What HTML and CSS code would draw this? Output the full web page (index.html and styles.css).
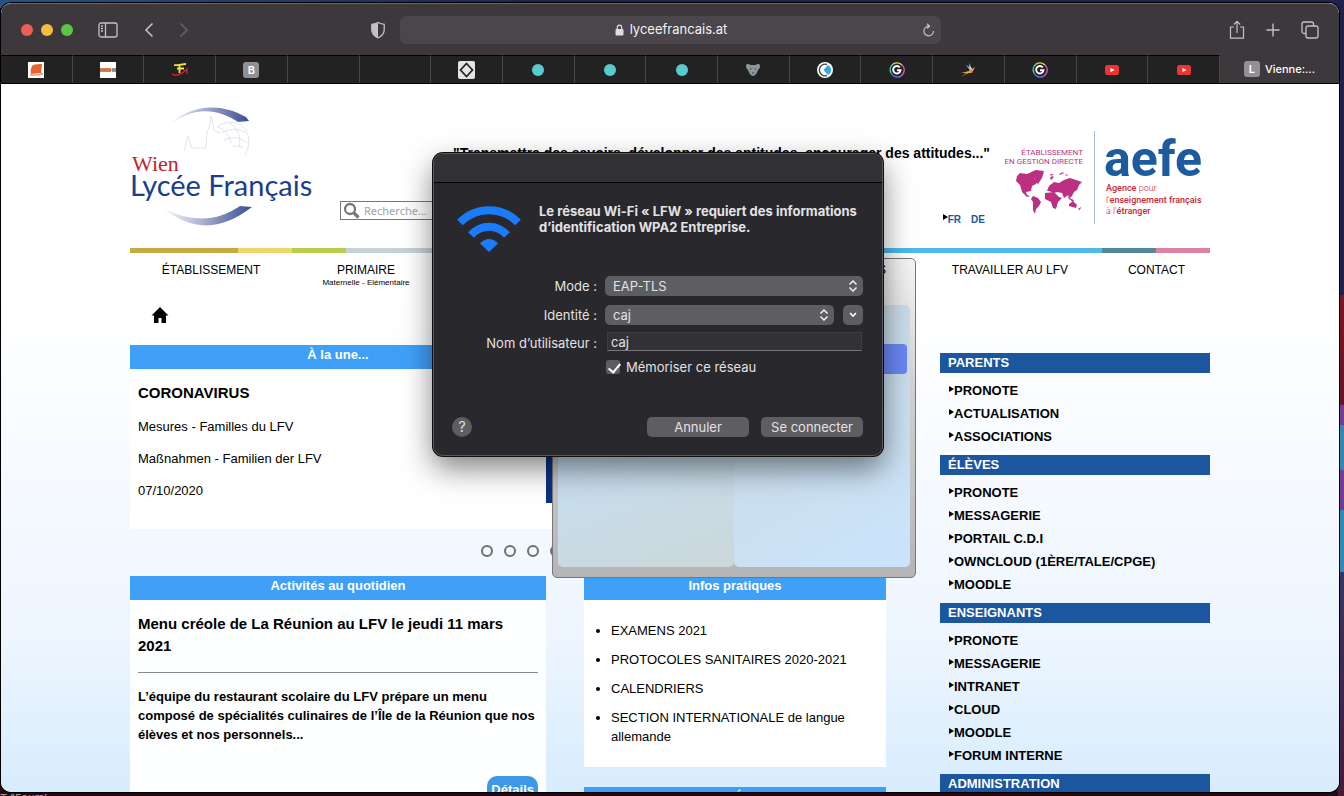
FILE: index.html
```html
<!DOCTYPE html>
<html lang="fr">
<head>
    <meta charset="UTF-8">
    <meta name="viewport" content="width=device-width, initial-scale=1.0">
    <title>Vienne: Lycée Français</title>
    <link rel="stylesheet" href="styles.css">
</head>
<body>
    <div class="desktop-label">T 15oum!</div>
    <div class="browser">
        <div class="toolbar">
            <div class="tool-group">
                <div class="lights"><span class="light red"></span><span class="light yellow"></span><span class="light green"></span></div>
                <button class="tool sidebar-btn" aria-label="Barre latérale">
                    <svg width="20" height="16" viewBox="0 0 20 16" fill="none" stroke="currentColor" stroke-width="1.3"><rect x="1" y="1" width="18" height="14" rx="2"/><path d="M7.5 1v14M3 4h2M3 6.500h2M3 9h2"/></svg>
                </button>
                <button class="tool back-btn" aria-label="Précédent">
                    <svg width="10" height="16" viewBox="0 0 10 16" fill="none" stroke="currentColor" stroke-width="1.6"><path d="M8.500 1.500L2 8l6.500 6.500"/></svg>
                </button>
                <button class="tool dim" aria-label="Suivant">
                    <svg width="10" height="16" viewBox="0 0 10 16" fill="none" stroke="currentColor" stroke-width="1.6"><path d="M1.500 1.500L8 8l-6.500 6.500"/></svg>
                </button>
            </div>
            <div class="address-area">
                <button class="tool" aria-label="Confidentialité">
                    <svg width="16" height="18" viewBox="0 0 16 18"><path d="M8 1.500C6.500 2.500 4 3 1.800 3.300V9c0 3.500 2.500 6 6.200 7.800C11.700 15 14.200 12.500 14.200 9V3.300C12 3 9.500 2.500 8 1.500z" fill="none" stroke="currentColor" stroke-width="1.300"/><path d="M8 1.500C6.500 2.500 4 3 1.800 3.300V9c0 3.500 2.500 6 6.200 7.800z" fill="currentColor"/></svg>
                </button>
                <div class="address">
                    <span class="url">
                        <svg width="9" height="12" viewBox="0 0 9 12"><rect x="0.500" y="5" width="8" height="6.500" rx="1" fill="#ddd"/><path d="M2.300 5.500V3.300a2.200 2.200 0 0 1 4.400 0v2.200" fill="none" stroke="#ddd" stroke-width="1.200"/></svg>
                        lyceefrancais.at
                    </span>
                    <button class="tool reload" aria-label="Recharger">
                        <svg width="13" height="14" viewBox="0 0 13 14" fill="none" stroke="currentColor" stroke-width="1.200"><path d="M7 3.200a4.800 4.800 0 1 0 4.500 4.800M5 .8l2.600 2.400L5 5.500"/></svg>
                    </button>
                </div>
            </div>
            <div class="tool-group end">
                <button class="tool" aria-label="Partager">
                    <svg width="16" height="20" viewBox="0 0 16 20" fill="none" stroke="currentColor" stroke-width="1.200"><path d="M5 7H1.500v11.200h13V7H11M8 13V1.500M4.800 4.500L8 1.300l3.200 3.200"/></svg>
                </button>
                <button class="tool" aria-label="Nouvel onglet">
                    <svg width="14" height="14" viewBox="0 0 14 14" stroke="currentColor" stroke-width="1.400"><path d="M7 .5v13M.5 7h13"/></svg>
                </button>
                <button class="tool" aria-label="Tous les onglets">
                    <svg width="18" height="18" viewBox="0 0 18 18" fill="none" stroke="currentColor" stroke-width="1.300"><rect x="5" y="5" width="12" height="12" rx="2"/><path d="M5 12.500H3a2 2 0 0 1-2-2V3a2 2 0 0 1 2-2h7.500a2 2 0 0 1 2 2v2"/></svg>
                </button>
            </div>
        </div>

        <div class="tabs">
            <div class="tab"><svg width="16" height="16" viewBox="0 0 16 16"><path fill="#fff" d="M0 0h16v16H0z"/><path d="M5 3c3-1 6-1 9-1l-1 9-10 1c-1-3 0-7 2-9z" fill="#e8622f"/><path d="M2 13h9l3-2v2" stroke="#e8622f" fill="none"/></svg></div>
            <div class="tab"><svg width="16" height="16" viewBox="0 0 16 16"><path fill="#fff" d="M0 0h16v16H0z"/><path d="M0 6h11v4H0z" fill="#d9804c"/><path d="M12 6h4v4h-4z" fill="#999"/><path d="M0 8h16" stroke="#a87858"/></svg></div>
            <div class="tab"><svg width="18" height="16" viewBox="0 0 18 16" fill="none"><path d="M3 3c3 1 8-1 12-1M6 6.500h7M8.500 3v8" stroke="#f2e43a" stroke-width="1.800"/><path d="M1 12c5 3 10 0 15-5M16 6v6" stroke="#d3242f" stroke-width="1.300"/></svg></div>
            <div class="tab"><span class="letter">B</span></div>
            <div class="tab"></div>
            <div class="tab"></div>
            <div class="tab"><svg width="17" height="18" viewBox="0 0 17 18"><rect width="17" height="18" rx="2" fill="#e4e4e4"/><path d="M8.500 2.500l6 6.500-6 6.500-6-6.500z" fill="none" stroke="#222" stroke-width="1.700"/></svg></div>
            <div class="tab"><span class="teal-dot"></span></div>
            <div class="tab"><span class="teal-dot"></span></div>
            <div class="tab"><span class="teal-dot"></span></div>
            <div class="tab"><svg width="16" height="14" viewBox="0 0 16 14"><path d="M1 3c0-3 4-2 4-1h6c0-1 4-2 4 1 0 2-1 3-2 4-1 3-3 6-5 6s-4-3-5-6C2 6 1 5 1 3z" fill="#8c979b"/><path d="M5 6h1.500M9.500 6H11M7 10h2" stroke="#444" stroke-width="1.200"/></svg></div>
            <div class="tab"><svg width="16" height="16" viewBox="0 0 16 16"><circle cx="8" cy="8" r="8" fill="#fff"/><path d="M10 2.500a5.800 5.800 0 1 0 0 11" fill="none" stroke="#3d4148" stroke-width="1.400"/><path d="M6.500 8L11 3c4 2 4 8 0 10z" fill="#31a8df"/></svg></div>
            <div class="tab"><svg width="16" height="16" viewBox="0 0 16 16" fill="none" stroke-width="1.500"><path d="M2 11A7 7 0 0 1 4 2.200" stroke="#4fc4ad"/><path d="M4 2.200A7 7 0 0 1 13 3" stroke="#e9c74c"/><path d="M13 3a7 7 0 0 1-1 11" stroke="#c75bbb"/><path d="M12 14A7 7 0 0 1 2 11" stroke="#626de0"/><path d="M10.800 5.500A3.700 3.700 0 1 0 11.500 8.300H8" stroke="#fff" stroke-width="1.900"/></svg></div>
            <div class="tab"><svg width="16" height="16" viewBox="0 0 16 16"><path d="M1 15l8-6 3 1-6 2z" fill="#f2c62f"/><path d="M6 3l4 6 3-1-3-3z" fill="#6f9cc9"/><path d="M1 11l8-2 6-4-3 6z" fill="#e8a04e"/><path d="M9 1l1 7 2-1z" fill="#d8d8d8"/><path d="M10 10l3-1-1 2z" fill="#dc4a31"/></svg></div>
            <div class="tab"><svg width="16" height="16" viewBox="0 0 16 16" fill="none" stroke-width="1.500"><path d="M2 11A7 7 0 0 1 4 2.200" stroke="#4fc4ad"/><path d="M4 2.200A7 7 0 0 1 13 3" stroke="#e9c74c"/><path d="M13 3a7 7 0 0 1-1 11" stroke="#c75bbb"/><path d="M12 14A7 7 0 0 1 2 11" stroke="#626de0"/><path d="M10.800 5.500A3.700 3.700 0 1 0 11.500 8.300H8" stroke="#fff" stroke-width="1.900"/></svg></div>
            <div class="tab"><svg width="14" height="10" viewBox="0 0 14 10"><rect width="14" height="10" rx="2.500" fill="#ec3434"/><path d="M5.500 3v4l4-2z" fill="#fff"/></svg></div>
            <div class="tab"><svg width="14" height="10" viewBox="0 0 14 10"><rect width="14" height="10" rx="2.500" fill="#ec3434"/><path d="M5.500 3v4l4-2z" fill="#fff"/></svg></div>
            <div class="tab active"><span class="letter">L</span>Vienne:...</div>
        </div>

        <div class="page">
            <div class="content">
                <header class="header">
                    <svg class="logo" width="185" height="124" viewBox="0 0 185 124">
                        <defs>
                            <linearGradient id="arc"><stop offset="0" stop-color="#fff"/><stop offset="1" stop-color="#3a4e93"/></linearGradient>
                        </defs>
                        <path d="M36 20C60-3 90-5 116 10l3 4-11 1C84-1 60 1 36 20z" fill="url(#arc)"/>
                        <path d="M32 100c28 24 58 25 90 0l-12-1C88 114 62 117 32 100z" fill="url(#arc)"/>
                        <g fill="none" stroke="#e2e4f0">
                            <path d="M54 44l4-15 4 12h14l1-17 2-2 2-13 3 14 6 3"/>
                            <path d="M87 20c10-8 26-6 31 8 2 8 0 14-3 20M87 20c8 2 12 8 14 16M91 26c9-5 17-5 25 0M94 33c8-4 16-3 23 3M103 39l10 1M99 16c10 5 12 15 10 24"/>
                        </g>
                        <text x="2" y="64" class="logo-city">Wien</text>
                        <text x="0" y="89" class="logo-name">Lycée Français</text>
                    </svg>
                    <div class="header-middle">
                        <p class="slogan">"Transmettre des savoirs, développer des aptitudes, encourager des attitudes..."</p>
                        <div class="header-tools">
                            <label class="search">
                                <svg width="18" height="18" viewBox="0 0 18 18" fill="none" stroke="#777"><circle cx="7" cy="7" r="5" stroke-width="2.300"/><path d="M10.500 10.500l5 5" stroke-width="3.200"/></svg>
                                <input type="text" placeholder="Recherche..." aria-label="Recherche">
                            </label>
                            <div class="langs"><a href="#" class="current">FR</a><a href="#">DE</a></div>
                        </div>
                    </div>
                    <svg class="aefe" width="208" height="94" viewBox="-4 0 208 94">
                        <g class="aefe-direct" text-anchor="end"><text x="77" y="24">ÉTABLISSEMENT</text><text x="77" y="33">EN GESTION DIRECTE</text></g>
                        <g fill="#bd2f83">
                            <path d="M11 45l3-3 7 1 5-2 3 4-1 3 4 1-2 4-4 2-1 5-5 1 1 3 3 1-3 1-5-5-2-7-4-4z"/>
                            <path d="M25 41l5-2 8 1-2 7-4 6-3-2-1-5-4-2z"/>
                            <path d="M27 65l5 2 3 4-2 4-3 3-1 5-2-4v-8l-2-3z"/>
                            <path d="M41 60l2-5 5-4 5 1 5-3 6-2 12 4-3 3-2 5-3 2-2 4-2 2-2-3-4 3-2-5-5-1-3 1-5-2z"/>
                            <path d="M39 62l9-1 5 5 3 1-4 4-2 7-3-1-2-6-6-3z"/>
                            <path d="M61 64l4 4 3 1-1 2-4-3zM63 73l4-3 4 4-1 3-7-2zM70 69l4 2M44 47l2-2 2 1-3 3zM72 78l3-2-1 3z"/>
                            <path d="M45 45l-1-2 4 0zM53 43l4-2 1 1-4 2zM59 44l2-1 1 2z" fill="#d9466f"/>
                        </g>
                        <path d="M88.500 0v93" stroke="#a5bfdd"/>
                        <text x="98" y="45" class="aefe-name">aefe</text>
                        <g class="aefe-full">
                            <text x="100" y="60">Agence <tspan class="light-word">pour</tspan></text>
                            <text x="100" y="72"><tspan class="light-word">l'</tspan>enseignement français</text>
                            <text x="100" y="83"><tspan class="light-word">à l'</tspan>étranger</text>
                        </g>
                    </svg>
                </header>

                <div class="stripe"><i class="gold"></i><i class="straw"></i><i class="lime"></i><i class="grey"></i><i class="sky"></i><i class="steel"></i><i class="pink"></i></div>

                <nav class="menu">
                    <a href="#">ÉTABLISSEMENT</a>
                    <a href="#">PRIMAIRE<small>Maternelle - Elémentaire</small></a>
                    <a href="#" class="admissions">ADMISSIONS</a>
                    <a href="#">TRAVAILLER AU LFV</a>
                    <a href="#">CONTACT</a>
                </nav>

                <a href="#" class="home" aria-label="Accueil">
                    <svg width="18" height="16" viewBox="0 0 18 16"><path d="M9 0l8.500 8.500H15V16h-4.500v-5h-3v5H3V8.500H.5z"/></svg>
                </a>

                <div class="columns">
                    <main class="main">
                        <section class="slider">
                            <h2 class="bar">À la une...</h2>
                            <div class="slide">
                                <div class="slide-text">
                                    <h3>CORONAVIRUS</h3>
                                    <p>Mesures - Familles du LFV</p>
                                    <p>Maßnahmen - Familien der LFV</p>
                                    <p>07/10/2020</p>
                                </div>
                                <div class="slide-picture"></div>
                            </div>
                            <div class="dots"><i></i><i></i><i></i><i></i></div>
                        </section>
                        <div class="cards">
                            <section>
                                <h2 class="bar">Activités au quotidien</h2>
                                <article class="news">
                                    <h3>Menu créole de La Réunion au LFV le jeudi 11 mars 2021</h3>
                                    <hr>
                                    <p>L’équipe du restaurant scolaire du LFV prépare un menu composé de spécialités culinaires de l’Île de la Réunion que nos élèves et nos personnels...</p>
                                    <a href="#" class="details">Détails</a>
                                </article>
                            </section>
                            <section>
                                <h2 class="bar">Infos pratiques</h2>
                                <ul class="infos">
                                    <li>EXAMENS 2021</li>
                                    <li>PROTOCOLES SANITAIRES 2020-2021</li>
                                    <li>CALENDRIERS</li>
                                    <li>SECTION INTERNATIONALE de langue allemande</li>
                                </ul>
                                <h2 class="bar">Les Élus</h2>
                            </section>
                        </div>
                    </main>
                    <aside class="side">
                        <h2>PARENTS</h2>
                        <ul>
                            <li><a href="#">PRONOTE</a></li>
                            <li><a href="#">ACTUALISATION</a></li>
                            <li><a href="#">ASSOCIATIONS</a></li>
                        </ul>
                        <h2>ÉLÈVES</h2>
                        <ul>
                            <li><a href="#">PRONOTE</a></li>
                            <li><a href="#">MESSAGERIE</a></li>
                            <li><a href="#">PORTAIL C.D.I</a></li>
                            <li><a href="#">OWNCLOUD (1ÈRE/TALE/CPGE)</a></li>
                            <li><a href="#">MOODLE</a></li>
                        </ul>
                        <h2>ENSEIGNANTS</h2>
                        <ul>
                            <li><a href="#">PRONOTE</a></li>
                            <li><a href="#">MESSAGERIE</a></li>
                            <li><a href="#">INTRANET</a></li>
                            <li><a href="#">CLOUD</a></li>
                            <li><a href="#">MOODLE</a></li>
                            <li><a href="#">FORUM INTERNE</a></li>
                        </ul>
                        <h2>ADMINISTRATION</h2>
                    </aside>
                </div>
            </div>
        </div>
    </div>

    <!-- windows floating over the browser -->
    <div class="panel">
        <div class="panel-body"><div></div><div></div></div>
        <div class="panel-highlight"></div>
    </div>

    <form class="dialog">
        <div class="dialog-title"></div>
        <div class="dialog-head">
            <svg width="64" height="48" viewBox="0 0 64 48" fill="none" stroke="#1a7bfb" stroke-width="8"><path d="M3 17.500C19 1 45 1 61 17.500M14 30c10-11 26-11 36 0"/><path d="M32 47l-9-8.500c5-6 13-6 18 0z" fill="#1a7bfb" stroke="none"/></svg>
            <p>Le réseau Wi-Fi « LFW » requiert des informations d’identification WPA2 Entreprise.</p>
        </div>
        <div class="fields">
            <label for="mode">Mode :</label>
            <div class="picker">
                <select id="mode"><option>EAP-TLS</option></select>
                <svg width="10" height="12" viewBox="0 0 10 12"><path d="M1.500 4.500L5 1l3.500 3.500M1.500 7.500L5 11l3.500-3.500"/></svg>
            </div>
            <label for="identity">Identité :</label>
            <div class="identity">
                <div class="picker">
                    <select id="identity"><option>caj</option></select>
                    <svg width="10" height="12" viewBox="0 0 10 12"><path d="M1.500 4.500L5 1l3.500 3.500M1.500 7.500L5 11l3.500-3.500"/></svg>
                </div>
                <button type="button" class="btn more" aria-label="Plus">
                    <svg width="8" height="6" viewBox="0 0 8 6" fill="none" stroke="#fff" stroke-width="1.600"><path d="M1 1l3 3 3-3"/></svg>
                </button>
            </div>
            <label for="user">Nom d’utilisateur :</label>
            <input type="text" id="user" value="caj">
            <label class="remember"><input type="checkbox" checked>Mémoriser ce réseau</label>
        </div>
        <div class="dialog-actions">
            <button type="button" class="help">?</button>
            <button type="button" class="btn">Annuler</button>
            <button type="button" class="btn">Se connecter</button>
        </div>
    </form>
</body>
</html>
```
FILE: styles.css
```css
* {
    box-sizing: border-box;
}
body {
    margin: 0;
    height: 100vh;
    padding: 3px 5px 4px 1px;
    overflow: hidden;
    font-family: Arial, "Liberation Sans", sans-serif;
    font-size: 13px;
    line-height: 19px;
    color: #000;
    background:
        linear-gradient(#212048 295px, #7c1525 295px, #651326 405px, #743b94 405px, #743b94 425px, #3189b0 425px, #3189b0 470px, #743b94 470px, #743b94 510px, #2f8cb5 510px, #2f8cb5 572px, #393466 572px, #451b38) right / 6px 100% no-repeat,
        linear-gradient(90deg, #285280, #20234f 40%) top / 100% 8px no-repeat,
        #280913;
}
h2, h3, p, ul {
    margin: 0;
    padding: 0;
}
h3 {
    font-size: 15px;
    line-height: 22px;
}
a {
    color: inherit;
    text-decoration: none;
}
button, input, select {
    font: inherit;
    color: inherit;
    margin: 0;
    padding: 0;
    border: 0;
    background: none;
}

/* label of an icon under the browser window */
.desktop-label {
    position: absolute;
    left: 0;
    top: 790px;
    height: 6px;
    overflow: hidden;
    font-family: Inter, sans-serif;
    font-size: 11px;
    line-height: 16px;
    color: #a89aa0;
}

/* browser window */
.browser {
    position: relative;
    display: flex;
    flex-direction: column;
    height: 100%;
    overflow: hidden;
    border-radius: 10px;
    background: #fff;
    box-shadow: 0 0 0 1px #000;
}
.toolbar {
    display: grid;
    grid-template-columns: 349px 571px 1fr;
    align-items: center;
    height: 52px;
    flex-shrink: 0;
    padding: 0 20px;
    background: #3c383c;
    border-top: 1px solid #69686d;
    border-radius: 10px 10px 0 0;
    font-family: Inter, sans-serif;
    color: #c3c1c4;
}
.tool-group {
    display: flex;
    align-items: center;
}
.tool-group.end {
    justify-content: flex-end;
    gap: 21px;
}
.lights {
    display: flex;
    gap: 8px;
}
.light {
    width: 12px;
    height: 12px;
    border-radius: 50%;
}
.red { background: #ed5f57; }
.yellow { background: #f5bd41; }
.green { background: #58c743; }
.tool {
    display: flex;
}
.sidebar-btn { margin: 0 26px 0 25px; }
.back-btn { margin-right: 25px; }
.dim { color: #656166; }
.address-area {
    display: flex;
    align-items: center;
    gap: 14px;
}
.address {
    flex: 1;
    display: flex;
    align-items: center;
    height: 28px;
    padding: 0 6px 0 20px;
    border-radius: 6px;
    background: #4a464b;
}
.url {
    flex: 1;
    display: flex;
    justify-content: center;
    align-items: center;
    gap: 6px;
    color: #f2f2f2;
}
.tabs {
    display: flex;
    height: 29px;
    flex-shrink: 0;
    background: #222;
    border-bottom: 1px solid #000;
    font-family: Inter, sans-serif;
    font-size: 11px;
    font-weight: 500;
    color: #fff;
}
.tab {
    flex: 1;
    display: flex;
    align-items: center;
    justify-content: center;
    border-top: 1px solid #000;
    border-right: 1px solid #484848;
}
.tab.active {
    flex: 0 0 119px;
    gap: 5px;
    background: #3c383c;
    border: 0;
}
.letter {
    width: 16px;
    height: 16px;
    border-radius: 3px;
    background: #929096;
    font-weight: 600;
    line-height: 16px;
    text-align: center;
}
.teal-dot {
    width: 12px;
    height: 12px;
    border-radius: 50%;
    background: #57cbce;
}

/* school page */
.page {
    flex: 1;
    min-height: 0;
    overflow: hidden;
    background: linear-gradient(#fff 220px, #f4f9ff 430px, #edf5fe 560px, #d7ecfd);
}
.content {
    max-width: 1080px;
    margin: 0 auto;
}
.header {
    display: flex;
    height: 164px;
}
.logo {
    flex-shrink: 0;
    margin: 23px 25px 0 0;
}
.logo-city {
    font: 22px "Liberation Serif", serif;
    fill: #c4232b;
}
.logo-name {
    font: 29px Lato, sans-serif;
    fill: #173f8f;
}
.header-middle {
    flex: 1;
    padding-top: 60px;
}
.slogan {
    font-size: 14px;
    font-weight: bold;
    text-align: right;
    white-space: nowrap;
}
.header-tools {
    display: flex;
    justify-content: space-between;
    padding-top: 38px;
}
.search {
    display: flex;
    align-items: center;
    width: 130px;
    height: 19px;
    padding: 0 2px;
    border: 1px solid #777;
    background: #fff;
}
.search input {
    width: 100px;
    padding-left: 3px;
    font-family: "Noto Sans", sans-serif;
    font-size: 11px;
    line-height: 16px;
}
.search input::placeholder {
    color: #a3a3a3;
}
.langs {
    display: flex;
    gap: 10px;
    padding: 9px 5px 0 0;
    font-size: 10px;
    font-weight: bold;
    color: #1a579d;
}
.current::before,
.side li::before {
    content: "";
    display: inline-block;
    border: 3px solid transparent;
    border-left: 5px solid #000;
    border-right: 0;
    vertical-align: 3px;
}
.aefe {
    flex-shrink: 0;
    margin: 47px 0 0 12px;
}
.aefe-direct {
    font: 8px Roboto, sans-serif;
    fill: #b83585;
}
.aefe-name {
    font: bold 50px Roboto, sans-serif;
    fill: #1d5b9f;
}
.aefe-full {
    font: 500 9px Roboto, sans-serif;
    fill: #cf2434;
}
.light-word {
    font-weight: 300;
}
.stripe {
    display: grid;
    grid-template-columns: 2fr 1fr 1fr 4fr 10fr 1fr 1fr;
    height: 5px;
}
.gold { background: #c6ab44; }
.straw { background: #eed66d; }
.lime { background: #b9cd4c; }
.grey { background: #c5d3d9; }
.sky { background: #4fb9e8; }
.steel { background: #56869b; }
.pink { background: #dd82a2; }
.menu {
    display: grid;
    grid-template-columns: 162px 148px 1fr 186px 107px;
    padding-top: 8px;
    height: 47px;
    font-size: 12px;
    text-align: center;
}
.menu small {
    display: block;
    font-size: 8px;
    line-height: 5px;
}
.menu a.admissions {
    position: relative;
    z-index: 2;
    text-align: right;
    padding-right: 31px;
}
.home {
    display: flex;
    padding: 7px 0 0 21px;
    height: 45px;
}
.columns {
    display: flex;
    gap: 54px;
}
.main {
    flex: 1;
}
.bar {
    height: 24px;
    font-size: 13px;
    line-height: 19px;
    text-align: center;
    color: #fff;
    background: #40a0f8;
}
.slider .bar {
    width: 416px;
}
.slide {
    display: flex;
    background: #fff;
}
.slide-text {
    width: 416px;
    padding: 13px 8px 29px;
}
.slide-text p {
    margin-top: 13px;
}
.slide-picture {
    flex: 1;
    margin-bottom: 26px;
    background: #093284;
}
.dots {
    display: flex;
    gap: 11px;
    padding: 16px 0 19px 351px;
}
.dots i {
    width: 12px;
    height: 12px;
    border: 2px solid #6d7073;
    border-radius: 50%;
}
.cards {
    display: grid;
    grid-template-columns: 416px 1fr;
    gap: 38px;
}
.news {
    display: flex;
    flex-direction: column;
    padding: 13px 8px 20px;
    background: #fcfeff;
    font-weight: bold;
}
.news hr {
    width: 100%;
    margin: 15px 0 14px;
    border: 0;
    border-top: 1px solid #888;
}
.details {
    align-self: flex-end;
    margin-top: 32px;
    padding: 4px;
    border-radius: 10px;
    color: #fff;
    background: #3d98e8;
}
.infos {
    margin-bottom: 20px;
    padding: 21px 27px;
    background: #fff;
}
.infos li + li {
    margin-top: 10px;
}
.side {
    width: 270px;
    padding-top: 8px;
}
.side h2 {
    height: 20px;
    padding-left: 8px;
    font-size: 13px;
    line-height: 19px;
    color: #fff;
    background: #1b569e;
}
.side ul {
    padding: 6px 9px 7px;
    list-style: none;
    font-weight: bold;
    line-height: 23px;
}
.side li {
    height: 23px;
}

/* grey panel behind the dialog */
.panel {
    position: absolute;
    left: 552px;
    top: 258px;
    width: 364px;
    height: 320px;
    padding: 46px 5px 10px;
    border: 1px solid #77777a;
    border-radius: 5px;
    background: linear-gradient(rgba(245, 245, 245, 0.95), #d2d2d2 40%, #b5b5b5);
}
.panel-body {
    display: grid;
    grid-template-columns: 1fr 1fr;
    height: 100%;
}
.panel-body div {
    border-radius: 5px;
    background: linear-gradient(160deg, #c6def3 40%, #cbd8da);
}
.panel-body div + div {
    background: linear-gradient(150deg, #c9d9e2, #cbe4fb);
}
.panel-highlight {
    position: absolute;
    right: 8px;
    top: 85px;
    width: 300px;
    height: 30px;
    border-radius: 4px;
    background: #6b87f6;
}

/* wi-fi dialog */
.dialog {
    position: absolute;
    z-index: 3;
    left: 433px;
    top: 153px;
    width: 450px;
    padding-bottom: 18px;
    border: 1px solid #59595d;
    border-radius: 10px;
    background: #29282c;
    box-shadow: 0 0 0 1px #111, 0 12px 30px rgba(0, 0, 0, 0.5);
    overflow: hidden;
    font-family: Inter, sans-serif;
    line-height: 16px;
    color: #e2e2e4;
}
.dialog-title {
    height: 29px;
    background: #323135;
    border-bottom: 1px solid #000;
}
.dialog-head {
    display: flex;
    gap: 18px;
    height: 93px;
    padding: 20px 0 0 23px;
}
.dialog-head svg {
    flex-shrink: 0;
    margin-top: 2px;
}
.dialog-head p {
    font-weight: 700;
}
.fields {
    display: grid;
    grid-template-columns: 163px 258px;
    column-gap: 8px;
    row-gap: 9px;
    align-items: center;
}
.fields label {
    text-align: right;
}
.picker {
    position: relative;
    flex: 1;
    height: 20px;
    border-radius: 5px;
    background: #5e5d62;
}
.picker select {
    appearance: none;
    width: 100%;
    height: 20px;
    padding-left: 8px;
}
.picker svg {
    position: absolute;
    right: 5px;
    top: 4px;
    fill: none;
    stroke: #f0f0f0;
    stroke-width: 1.5;
    pointer-events: none;
}
.identity {
    display: flex;
    gap: 9px;
}
.btn {
    width: 102px;
    height: 20px;
    border-radius: 5px;
    background: #5e5d62;
}
.btn.more {
    display: flex;
    align-items: center;
    justify-content: center;
    width: 20px;
}
.fields input[type="text"] {
    height: 19px;
    margin: -2px 1px 0 2px;
    padding-left: 3px;
    border: 1px solid #3e3d42;
    border-bottom-color: #77767a;
    background: #323136;
}
.fields .remember {
    grid-column: 2;
    display: flex;
    align-items: center;
    gap: 6px;
    margin-top: -1px;
}
.remember input {
    appearance: none;
    width: 14px;
    height: 14px;
    margin-left: 1px;
    border-radius: 3px;
    background: #5e5d62;
    position: relative;
}
.remember input:checked::after {
    content: "";
    position: absolute;
    left: 5px;
    top: 1px;
    width: 5px;
    height: 10px;
    border: solid #fff;
    border-width: 0 2px 2px 0;
    transform: rotate(40deg);
}
.dialog-actions {
    display: flex;
    gap: 12px;
    padding: 42px 19px 0 18px;
}
.help {
    width: 20px;
    height: 20px;
    margin-right: auto;
    border-radius: 50%;
    background: #5e5d62;
    font-size: 14px;
}
```
